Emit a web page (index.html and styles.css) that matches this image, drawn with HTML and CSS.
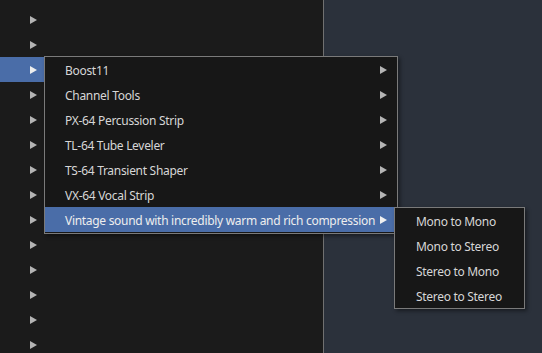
FILE: index.html
```html
<!DOCTYPE html>
<html lang="en">
<head>
  <meta charset="UTF-8" />
  <title>Plugin menu</title>
  <link rel="stylesheet" href="styles.css">
</head>
<body>

  <div class="tree">
    <div class="row"><span class="tri"></span></div>
    <div class="row"><span class="tri"></span></div>
    <div class="row active"><span class="tri"></span></div>
    <div class="row"><span class="tri"></span></div>
    <div class="row"><span class="tri"></span></div>
    <div class="row"><span class="tri"></span></div>
    <div class="row"><span class="tri"></span></div>
    <div class="row"><span class="tri"></span></div>
    <div class="row"><span class="tri"></span></div>
    <div class="row"><span class="tri"></span></div>
    <div class="row"><span class="tri"></span></div>
    <div class="row"><span class="tri"></span></div>
    <div class="row"><span class="tri"></span></div>
    <div class="row"><span class="tri"></span></div>
  </div>
  <div class="side"></div>

  <ul class="menu main-menu">
    <li>Boost11 <span class="tri"></span></li>
    <li>Channel Tools <span class="tri"></span></li>
    <li>PX-64 Percussion Strip <span class="tri"></span></li>
    <li>TL-64 Tube Leveler <span class="tri"></span></li>
    <li>TS-64 Transient Shaper <span class="tri"></span></li>
    <li>VX-64 Vocal Strip <span class="tri"></span></li>
    <li class="hover">Vintage sound with incredibly warm and rich compression <span class="tri"></span></li>
  </ul>

  <ul class="menu sub-menu">
    <li>Mono to Mono</li>
    <li>Mono to Stereo</li>
    <li>Stereo to Mono</li>
    <li>Stereo to Stereo</li>
  </ul>

</body>
</html>
```

FILE: styles.css
```css
body {
  margin: 0;
  height: 353px;
  display: flex;
  overflow: hidden;
  font-family: 'Noto Sans', 'Segoe UI', sans-serif;
  font-size: 12px;
  letter-spacing: -0.3px;
  background: #2b313b;
}

.tree {
  width: 323px;
  background: #1b1b1b;
  border-right: 1px solid #707070;
  padding-top: 7px;
}

.side {
  flex: 1;
  background: #2b313b;
}

.row {
  width: 44px;
  height: 25px;
  display: flex;
  align-items: center;
  padding-left: 30px;
  box-sizing: border-box;
}

.row.active {
  background: #4a6da8;
}

.tri {
  display: inline-block;
  width: 0;
  height: 0;
  border-left: 7px solid #b4b4b4;
  border-top: 4px solid transparent;
  border-bottom: 4px solid transparent;
}

.row.active .tri {
  border-left-color: #eeeeee;
}

.menu {
  position: absolute;
  margin: 0;
  padding: 0 0 1px;
  list-style: none;
  background: #171717;
  border: 1px solid #7a7a7a;
  box-shadow: 2px 2px 4px rgba(0,0,0,0.45);
  color: #d6d6d6;
}

.menu li {
  height: 25px;
  display: flex;
  align-items: center;
  padding: 1px 10px 0 20px;
  box-sizing: border-box;
  white-space: nowrap;
}

.menu li .tri {
  margin-left: auto;
}

.menu li.hover {
  background: #4a6da8;
  color: #eeeeee;
}

.menu li.hover .tri {
  border-left-color: #f0f0f0;
}

.main-menu {
  left: 44px;
  top: 56px;
  width: 352px;
}

.sub-menu {
  left: 394px;
  top: 207px;
  width: 129px;
  padding: 0;
}

.sub-menu li {
  padding-left: 21px;
}
```
